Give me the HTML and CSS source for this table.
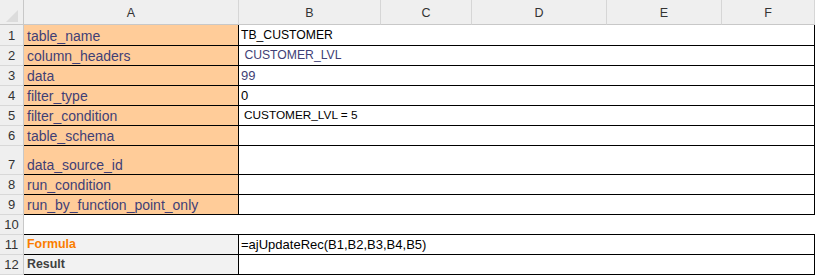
FILE: index.html
```html
<!DOCTYPE html>
<html>
<head>
<meta charset="utf-8">
<link rel="stylesheet" href="styles.css">
</head>
<body>
<div class="sheet">
  <div class="corner"><svg width="24" height="25" viewBox="0 0 24 25"><polygon points="18,10 18,22 6,22" fill="#dcdcdc"/></svg></div>
  <div class="ch">A</div>
  <div class="ch">B</div>
  <div class="ch">C</div>
  <div class="ch">D</div>
  <div class="ch">E</div>
  <div class="ch">F</div>

  <div class="rh">1</div><div class="cell key">table_name</div><div class="cell val caps">TB_CUSTOMER</div>
  <div class="rh">2</div><div class="cell key">column_headers</div><div class="cell val caps navy">&nbsp;CUSTOMER_LVL</div>
  <div class="rh">3</div><div class="cell key">data</div><div class="cell val num navy">99</div>
  <div class="rh">4</div><div class="cell key">filter_type</div><div class="cell val num">0</div>
  <div class="rh">5</div><div class="cell key">filter_condition</div><div class="cell val cond">CUSTOMER_LVL = 5</div>
  <div class="rh">6</div><div class="cell key">table_schema</div><div class="cell val"></div>
  <div class="rh">7</div><div class="cell key">data_source_id</div><div class="cell val"></div>
  <div class="rh">8</div><div class="cell key">run_condition</div><div class="cell val"></div>
  <div class="rh">9</div><div class="cell key">run_by_function_point_only</div><div class="cell val"></div>
  <div class="rh">10</div><div class="cell gap"></div>
  <div class="rh">11</div><div class="cell key calc">Formula</div><div class="cell val formula">=ajUpdateRec(B1,B2,B3,B4,B5)</div>
  <div class="rh">12</div><div class="cell key out">Result</div><div class="cell val"></div>
</div>
</body>
</html>
```

FILE: styles.css
```css
html, body {
  margin: 0;
  padding: 0;
  background: #ffffff;
}

.sheet {
  display: grid;
  grid-template-columns: 24px 215px 142px 91px 135px 115px 93px;
  grid-template-rows: 25px 21px repeat(5, 20px) 29px repeat(5, 20px);
  width: 815px;
  font-family: "Liberation Sans", Arial, sans-serif;
  font-size: 14px;
}

.corner {
  background: #efefef;
  border-right: 1px solid #c8c8c8;
  border-bottom: 1px solid #c8c8c8;
  box-sizing: border-box;
}

.corner svg {
  display: block;
}

.ch {
  background: #efefef;
  border-bottom: 1px solid #c8c8c8;
  border-right: 1px solid #d6d6d6;
  box-sizing: border-box;
  display: flex;
  align-items: center;
  justify-content: center;
  color: #333333;
  font-size: 12.5px;
  padding-top: 2px;
}

.rh {
  grid-column: 1;
  background: #efefef;
  border-right: 1px solid #c8c8c8;
  border-bottom: 1px solid #d8d8d8;
  box-sizing: border-box;
  display: flex;
  align-items: flex-end;
  justify-content: center;
  padding-bottom: 2px;
  line-height: 15px;
  color: #333333;
  font-size: 13px;
}

.cell {
  box-sizing: border-box;
  display: flex;
  align-items: flex-end;
  padding: 0 0 1px 3px;
  line-height: 16px;
  white-space: pre;
  overflow: hidden;
}

.key {
  grid-column: 2;
  background: #ffcc99;
  color: #3f3f76;
  border-right: 1px solid #000000;
  border-bottom: 1px solid #000000;
}

.val {
  grid-column: 3 / -1;
  padding-left: 2px;
  color: #000000;
  border-right: 1px solid #000000;
  border-bottom: 1px solid #000000;
}

.caps {
  font-size: 12.2px;
  line-height: 15px;
  padding-bottom: 2px;
}

.num {
  font-size: 13px;
  line-height: 15px;
  padding-bottom: 2px;
}

.formula {
  font-size: 13px;
  line-height: 15px;
  padding-bottom: 2px;
}

.navy {
  color: #3f3f76;
}

.cond {
  padding-left: 5px;
  font-size: 11.8px;
  line-height: 15px;
  padding-bottom: 2px;
}

.gap {
  grid-column: 2 / -1;
  border-bottom: 1px solid #000000;
}

.calc {
  background: #f2f2f2;
  color: #fa7d00;
  font-weight: bold;
  font-size: 12.4px;
  line-height: 15px;
  padding-bottom: 2px;
}

.out {
  background: #f2f2f2;
  color: #3f3f3f;
  font-weight: bold;
  font-size: 12.4px;
  line-height: 15px;
  padding-bottom: 2px;
}
```
